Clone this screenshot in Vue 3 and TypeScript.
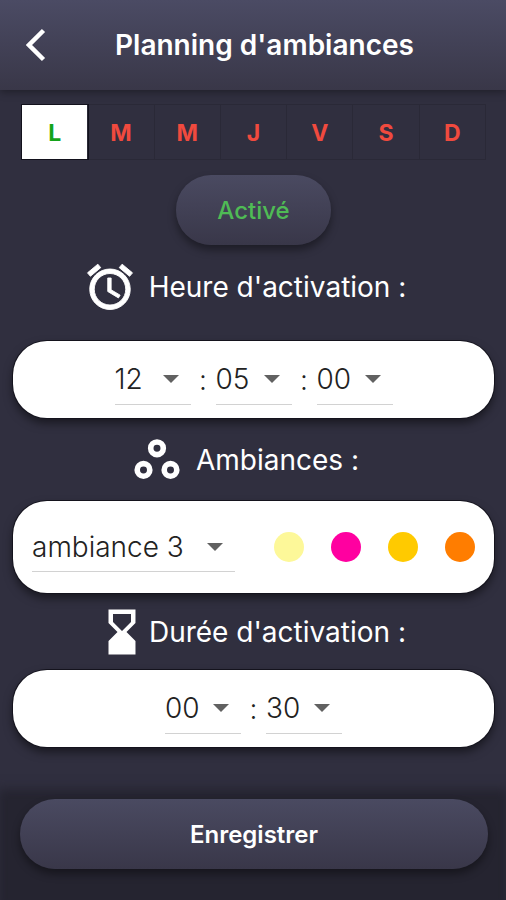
<script setup lang="ts">
import { ref } from 'vue'

interface Day {
  name: string
  letter: string
}

const days: Day[] = [
  { name: 'Lundi', letter: 'L' },
  { name: 'Mardi', letter: 'M' },
  { name: 'Mercredi', letter: 'M' },
  { name: 'Jeudi', letter: 'J' },
  { name: 'Vendredi', letter: 'V' },
  { name: 'Samedi', letter: 'S' },
  { name: 'Dimanche', letter: 'D' },
]

const range = (count: number): string[] =>
  Array.from({ length: count }, (_, i) => String(i).padStart(2, '0'))

const hours = range(24)
const sixty = range(60)
const ambiances = ['ambiance 1', 'ambiance 2', 'ambiance 3', 'ambiance 4']
const colors = ['#fdf899', '#ff00a0', '#ffca00', '#ff7d00']

const selectedDay = ref(0)
const enabled = ref(true)
const start = ref(['12', '05', '00'])
const startFields = [
  { label: 'Heures', options: hours },
  { label: 'Minutes', options: sixty },
  { label: 'Secondes', options: sixty },
]
const ambiance = ref('ambiance 3')
const duration = ref(['00', '30'])
const durationFields = [
  { label: 'Durée en minutes', options: sixty },
  { label: 'Durée en secondes', options: sixty },
]
</script>

<template>
  <div class="screen">
    <header class="bar">
      <button class="back" type="button" aria-label="Retour">
        <svg viewBox="0 0 20 34" aria-hidden="true">
          <path d="M17.5 2.5L3 17l14.5 14.5" />
        </svg>
      </button>
      <h1>Planning d'ambiances</h1>
    </header>

    <main class="content">
      <div class="days">
        <button
          v-for="(day, i) in days"
          :key="day.name"
          type="button"
          class="day"
          :class="{ selected: i === selectedDay }"
          :aria-label="day.name"
          :aria-pressed="i === selectedDay"
          @click="selectedDay = i"
        >
          {{ day.letter }}
        </button>
      </div>

      <button class="pill toggle" type="button" :aria-pressed="enabled" @click="enabled = !enabled">
        {{ enabled ? 'Activé' : 'Désactivé' }}
      </button>

      <h2 class="heading spaced">
        <svg class="icon alarm" viewBox="0 0 24 24" aria-hidden="true">
          <path d="M22 5.72l-4.6-3.86-1.29 1.53 4.6 3.86L22 5.72zM7.88 3.39L6.6 1.86 2 5.71l1.29 1.53 4.59-3.85zM12.5 8H11v6l4.75 2.85.75-1.23-4-2.37V8zM12 4c-4.97 0-9 4.03-9 9s4.02 9 9 9c4.97 0 9-4.03 9-9s-4.03-9-9-9zm0 16c-3.87 0-7-3.13-7-7s3.13-7 7-7 7 3.13 7 7-3.13 7-7 7z" />
        </svg>
        <span>Heure d'activation :</span>
      </h2>

      <section class="card time">
        <template v-for="(field, i) in startFields" :key="field.label">
          <span v-if="i > 0" class="colon">:</span>
          <label class="field">
            <select v-model="start[i]" :aria-label="field.label">
              <option v-for="o in field.options" :key="o">{{ o }}</option>
            </select>
            <svg class="caret" viewBox="0 0 16 8" aria-hidden="true"><path d="M0 0h16L8 8z" /></svg>
          </label>
        </template>
      </section>

      <h2 class="heading spaced">
        <svg class="icon rings" viewBox="0 0 24 24" aria-hidden="true">
          <circle cx="12" cy="6.8" r="2.8" />
          <circle cx="6" cy="16.4" r="2.8" />
          <circle cx="18" cy="16.4" r="2.8" />
        </svg>
        <span>Ambiances :</span>
      </h2>

      <section class="card ambiance">
        <label class="field wide">
          <select v-model="ambiance" aria-label="Ambiance">
            <option v-for="a in ambiances" :key="a">{{ a }}</option>
          </select>
          <svg class="caret" viewBox="0 0 16 8" aria-hidden="true"><path d="M0 0h16L8 8z" /></svg>
        </label>
        <div class="dots">
          <svg v-for="c in colors" :key="c" class="dot" viewBox="0 0 30 30" aria-hidden="true">
            <circle cx="15" cy="15" r="15" :fill="c" />
          </svg>
        </div>
      </section>

      <h2 class="heading">
        <svg class="icon" viewBox="0 0 24 24" aria-hidden="true">
          <path d="M18 22l-.01-6L14 12l3.99-4.01L18 2H6v6l4 4-4 3.99V22h12zM8 7.5V4h8v3.5l-4 4-4-4z" />
        </svg>
        <span>Durée d'activation :</span>
      </h2>

      <section class="card time">
        <template v-for="(field, i) in durationFields" :key="field.label">
          <span v-if="i > 0" class="colon">:</span>
          <label class="field">
            <select v-model="duration[i]" :aria-label="field.label">
              <option v-for="o in field.options" :key="o">{{ o }}</option>
            </select>
            <svg class="caret" viewBox="0 0 16 8" aria-hidden="true"><path d="M0 0h16L8 8z" /></svg>
          </label>
        </template>
      </section>
    </main>

    <footer class="footer">
      <button class="pill save" type="button">Enregistrer</button>
    </footer>
  </div>
</template>

<style>
body {
  margin: 0;
  background: #302f3f;
}
</style>

<style scoped>
.screen {
  display: flex;
  flex-direction: column;
  min-height: 100vh;
  overflow: hidden;
  background: #302f3f;
  color: #fff;
  font-family: Inter, "Liberation Sans", sans-serif;
}

button,
select {
  margin: 0;
  padding: 0;
  border: 0;
  background: none;
  color: inherit;
  font: inherit;
  cursor: pointer;
}

.bar {
  display: flex;
  align-items: center;
  gap: 43px;
  height: 90px;
  background: linear-gradient(#4b4b64, #393748);
  box-shadow: 0 2px 8px rgba(0, 0, 0, 0.35);
}

.back {
  display: flex;
  align-items: center;
  justify-content: center;
  width: 72px;
  height: 72px;
}

.back svg {
  width: 20px;
  height: 34px;
  fill: none;
  stroke: #fff;
  stroke-width: 4.5;
}

h1 {
  margin: 0;
  font-size: 28px;
  line-height: 36px;
  font-weight: 600;
}

.content {
  display: flex;
  flex-direction: column;
  align-items: center;
  padding: 14px 12px 0 13px;
}

.days {
  display: flex;
  align-self: stretch;
  margin: 0 8px;
  border: 1px solid #2a2937;
}

.day {
  flex: 1;
  height: 54px;
  padding-top: 2px;
  border-right: 1px solid #2a2937;
  color: #f04a3e;
  font-size: 23px;
  font-weight: 700;
}

.day:last-child {
  border-right: 0;
}

.day.selected {
  background: #fff;
  color: #14a31a;
  box-shadow: 0 0 0 1px #12111c;
}

.pill {
  height: 70px;
  border-radius: 35px;
  background: linear-gradient(#4a4a61, #393749);
  box-shadow: 0 5px 9px rgba(0, 0, 0, 0.4);
}

.toggle {
  width: 155px;
  margin-top: 15px;
  color: #4fbb55;
  font-size: 24px;
  font-weight: 500;
}

.heading {
  display: flex;
  align-items: center;
  justify-content: center;
  height: 54px;
  margin: 12px 0;
  padding-right: 6px;
  font-size: 28px;
  font-weight: 400;
}

.spaced {
  gap: 12px;
  padding-right: 18px;
}

.toggle + .heading {
  margin: 15px 0 27px;
}

.card + .heading {
  margin: 15px 0 14px;
}

.ambiance + .heading {
  margin: 12px 0 11px;
}

.icon {
  width: 54px;
  height: 54px;
  fill: #fff;
}

.alarm {
  stroke: #fff;
  stroke-width: 0.4;
}

.rings {
  fill: none;
  stroke: #fff;
  stroke-width: 2.5;
}

.card {
  display: flex;
  align-items: center;
  align-self: stretch;
  box-sizing: border-box;
  height: 77px;
  border-radius: 34px;
  background: #fff;
  color: #222;
  font-size: 28px;
  font-weight: 300;
  box-shadow: 0 0 0 1px #14131d, 0 5px 10px rgba(0, 0, 0, 0.5);
}

.time {
  justify-content: center;
}

.colon {
  width: 25px;
  text-align: center;
}

.field {
  display: grid;
  align-items: center;
  width: 76px;
  height: 50px;
  box-sizing: border-box;
  border-bottom: 1px solid #d2d2d2;
}

.field select,
.caret {
  grid-area: 1 / 1;
}

.field select {
  width: 100%;
  height: 49px;
  appearance: none;
  outline-offset: 2px;
}

.caret {
  justify-self: end;
  width: 16px;
  height: 8px;
  margin-right: 12px;
  fill: #616161;
  pointer-events: none;
}

.ambiance {
  justify-content: space-between;
  height: 92px;
  padding: 0 19px;
}

.wide {
  width: 203px;
}

.dots {
  display: flex;
  gap: 27px;
}

.dot {
  width: 30px;
  height: 30px;
}

.footer {
  display: flex;
  flex: 1;
  margin: 52px 8px 0;
  padding: 0 10px 31px 12px;
  background: #252430;
  box-shadow: 0 0 10px 10px #252430;
}

.save {
  flex: 1;
  font-size: 24px;
  font-weight: 600;
}
</style>
